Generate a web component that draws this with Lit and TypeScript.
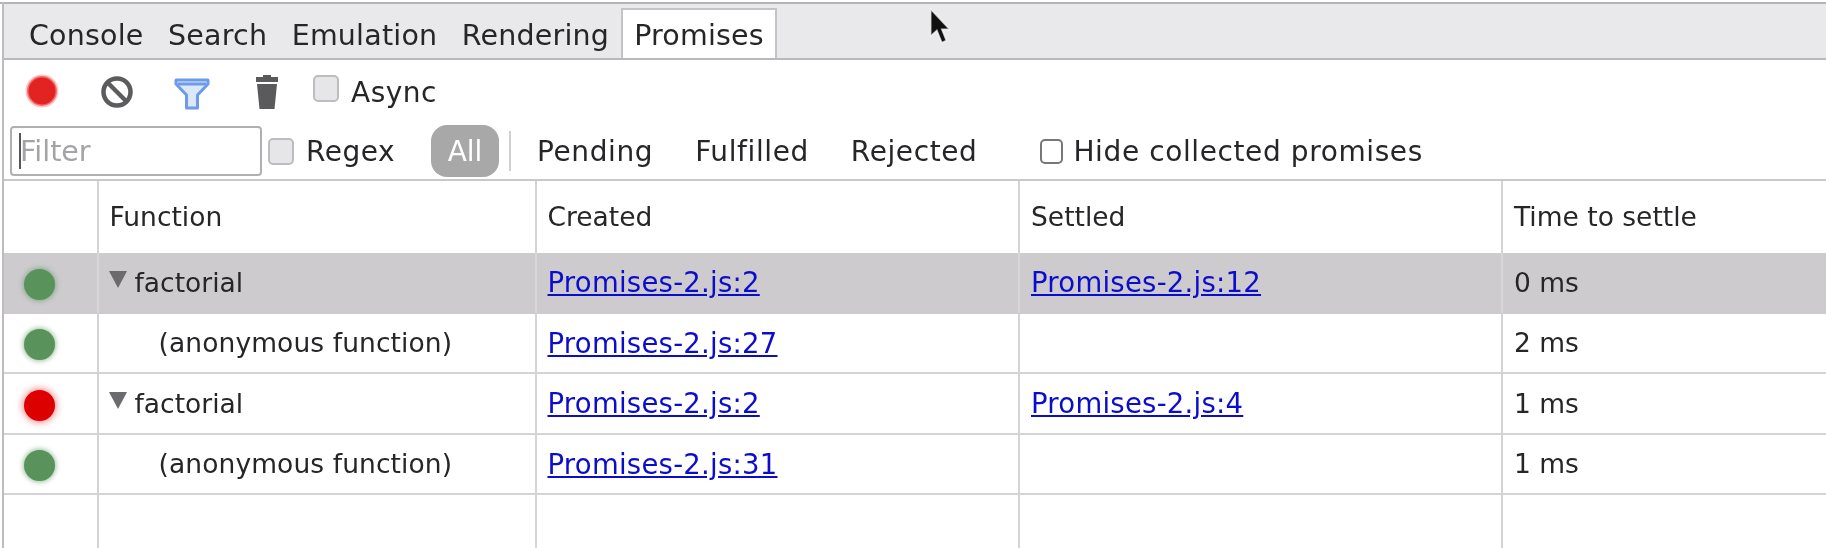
import { LitElement, html, css, svg } from "lit";
import { customElement } from "lit/decorators.js";

interface Row { status: "ok" | "bad"; fn: string; child: boolean; created: string; settled: string; time: string; selected?: boolean; }

const ROWS: Row[] = [
  { status: "ok", fn: "factorial", child: false, created: "Promises-2.js:2", settled: "Promises-2.js:12", time: "0 ms", selected: true },
  { status: "ok", fn: "(anonymous function)", child: true, created: "Promises-2.js:27", settled: "", time: "2 ms" },
  { status: "bad", fn: "factorial", child: false, created: "Promises-2.js:2", settled: "Promises-2.js:4", time: "1 ms" },
  { status: "ok", fn: "(anonymous function)", child: true, created: "Promises-2.js:31", settled: "", time: "1 ms" },
];

@customElement("app-root")
export class AppRoot extends LitElement {
  static styles = css`
    :host { display: block; width: 1826px; height: 548px; overflow: hidden; background: #fff; }
    .frame { position: relative; box-sizing: border-box; width: 1826px; height: 548px; padding-top: 3px; padding-left: 2px;
      font-family: "DejaVu Sans", sans-serif; color: #262628; filter: blur(0.5px); background: #fff; overflow: hidden; }
    .edge-top { position: absolute; left: 0; right: 0; top: 2px; height: 2px; background: #b4b4b6; }
    .edge-left { position: absolute; left: 2px; top: 2px; bottom: 0; width: 2px; background: #bdbdbf; }
    .tabs { height: 57px; box-sizing: border-box; background: #e9e9eb; border-bottom: 2px solid #b9b9bb; display: flex; align-items: flex-end; padding-left: 27px; font-size: 28.5px; }
    .tab { height: 48px; padding-top: 2px; box-sizing: border-box; display: flex; align-items: center; letter-spacing: 0.2px; margin-right: 24.5px; white-space: nowrap; }
    .tab.active { background: #fff; height: 50px; margin-left: -12.5px; padding: 2px 11px 0; border: 2px solid #c4c4c6; border-bottom: 0; margin-right: 0; }
    .bar1 { height: 62px; display: flex; align-items: center; padding-left: 22px; box-sizing: border-box; font-size: 28px; }
    .bar1 svg { display: block; flex: none; }
    .bar1 .rec { width: 36px; height: 36px; margin-right: 39px; }
    .bar1 .clr { width: 36px; height: 36px; margin-right: 39px; position: relative; top: 1px; }
    .bar1 .flt { width: 36px; height: 32px; margin-right: 44px; position: relative; top: 3px; }
    .bar1 .trash { width: 26px; height: 38px; margin-right: 33px; }
    .cb { box-sizing: border-box; width: 26px; height: 27px; border: 2px solid #bdbdbf; border-radius: 5px; background: #e6e6e8; flex: none; }
    .cb.white { width: 23px; height: 25px; background: #fff; border-color: #77777a; }
    .lbl { margin-left: 12px; white-space: nowrap; letter-spacing: 0.5px; }
    .async { position: relative; top: -3px; }
    .asynctext { position: relative; top: 1px; }
    .bar2 { height: 59px; padding-top: 1px; box-sizing: border-box; display: flex; align-items: center; padding-left: 8px; font-size: 28px; border-bottom: 2px solid #c9c9cb; }
    .input { box-sizing: border-box; width: 252px; height: 50px; border: 2px solid #b0b0b2; border-radius: 4px; display: flex; align-items: center; padding-left: 7px; color: #a4a4a6; margin-right: 6px; font-size: 28.5px; }
    .caret { width: 2px; height: 36px; background: #55555a; margin-right: -1px; }
    .pill { width: 68px; height: 52px; border-radius: 16px; background: #a8a8a8; color: #fff; display: flex; align-items: center; justify-content: center; margin-left: 36px; font-size: 28px; }
    .sep { width: 2px; height: 40px; background: #d0d0d2; margin-left: 10px; margin-right: 26px; }
    .seg { white-space: nowrap; letter-spacing: 0.6px; }
    .seg + .seg { margin-left: 42px; }
    .hide { margin-left: 63px; display: flex; align-items: center; }
    .hide .lbl { margin-left: 10px; letter-spacing: 0.6px; }
    .grid { display: grid; grid-template-columns: 96.5px 438px 483.5px 483px 1fr; font-size: 26.5px; }
    .cell { box-sizing: border-box; height: 60.5px; border-bottom: 2px solid #d4d4d6; border-right: 2px solid #d4d4d6; display: flex; align-items: center; padding-left: 11px; white-space: nowrap; }
    .cell:nth-child(5n) { border-right: 0; }
    .head { height: 72px; border-bottom: 0; padding-bottom: 1px; }
    .sel { background: #cdcbce; border-bottom-color: #cdcbce; border-right-color: #d9d7da; }
    .status { padding-left: 22px; padding-top: 4px; }
    .status span { display: block; width: 31px; height: 31px; border-radius: 50%; }
    .ok { background: #59925a; box-shadow: 0 0 5px 1px rgba(89,146,90,.6); }
    .bad { background: #dd0000; box-shadow: 0 0 6px 2px rgba(240,70,70,.55); }
    .arrow { width: 18px; height: 18px; margin-left: -1px; margin-right: 8px; margin-top: -6px; flex: none; }
    .indent { padding-left: 60px; letter-spacing: 0.1px; }
    a { color: #0c0ccc; text-decoration: underline; font-size: 27.5px; letter-spacing: 0.25px; }
    .empty { height: 60px; border-bottom: 0; }
    .cursor { position: absolute; left: 926px; top: 7px; width: 25px; height: 38px; }
  `;

  private icons() {
    return {
      rec: svg`<circle cx="18" cy="18" r="15" fill="#e32222" stroke="#f8a0a0" stroke-opacity=".6" stroke-width="3"/>`,
      clr: svg`<circle cx="18" cy="18" r="13.5" fill="none" stroke="#5c5c5e" stroke-width="4.5"/><path d="M8.5 8.5L27.5 27.5" stroke="#5c5c5e" stroke-width="4.5"/>`,
      flt: svg`<path d="M2 2H34V6L23.5 17V30H12.5V17L2 6Z" fill="#dbe7fa" stroke="#6d9be8" stroke-width="3" stroke-linejoin="round"/><path d="M4 6H32" stroke="#6d9be8" stroke-width="3"/>`,
      trash: svg`<path d="M9 3H17V5H24V10H2V5H9Z" fill="#5a5a5c"/><path d="M3 12H23L20.5 37H5.5Z" fill="#5a5a5c"/>`,
    };
  }

  render() {
    const ic = this.icons();
    return html`<div class="frame">
      <div class="edge-top"></div>
      <div class="edge-left"></div>
      <div class="tabs">
        <div class="tab">Console</div><div class="tab">Search</div><div class="tab">Emulation</div><div class="tab">Rendering</div><div class="tab active">Promises</div>
      </div>
      <div class="bar1">
        <svg class="rec" viewBox="0 0 36 36">${ic.rec}</svg>
        <svg class="clr" viewBox="0 0 36 36">${ic.clr}</svg>
        <svg class="flt" viewBox="0 0 36 32">${ic.flt}</svg>
        <svg class="trash" viewBox="0 0 26 38">${ic.trash}</svg>
        <div class="cb async"></div><div class="lbl asynctext">Async</div>
      </div>
      <div class="bar2">
        <div class="input"><span class="caret"></span>Filter</div>
        <div class="cb"></div><div class="lbl">Regex</div>
        <div class="pill">All</div><div class="sep"></div>
        <div class="seg">Pending</div><div class="seg">Fulfilled</div><div class="seg">Rejected</div>
        <div class="hide"><div class="cb white"></div><div class="lbl">Hide collected promises</div></div>
      </div>
      <div class="grid">
        <div class="cell head"></div><div class="cell head">Function</div><div class="cell head">Created</div><div class="cell head">Settled</div><div class="cell head">Time to settle</div>
        ${ROWS.map((r) => {
          const s = r.selected ? "sel" : "";
          return html`
            <div class="cell status ${s}"><span class=${r.status}></span></div>
            <div class="cell ${s} ${r.child ? "indent" : ""}">${r.child ? "" : html`<svg class="arrow" viewBox="0 0 18 18"><path d="M0 1H18L9 18Z" fill="#6b6b6d"/></svg>`}${r.fn}</div>
            <div class="cell ${s}"><a>${r.created}</a></div>
            <div class="cell ${s}">${r.settled ? html`<a>${r.settled}</a>` : ""}</div>
            <div class="cell ${s}">${r.time}</div>`;
        })}
        <div class="cell empty"></div><div class="cell empty"></div><div class="cell empty"></div><div class="cell empty"></div><div class="cell empty"></div>
      </div>
      <svg class="cursor" viewBox="0 0 22 34"><path d="M4 2V26L9.5 21L14 32L18 30L14 20H21Z" fill="#111" stroke="#fff" stroke-width="1.5" stroke-opacity=".7"/></svg>
    </div>`;
  }
}
